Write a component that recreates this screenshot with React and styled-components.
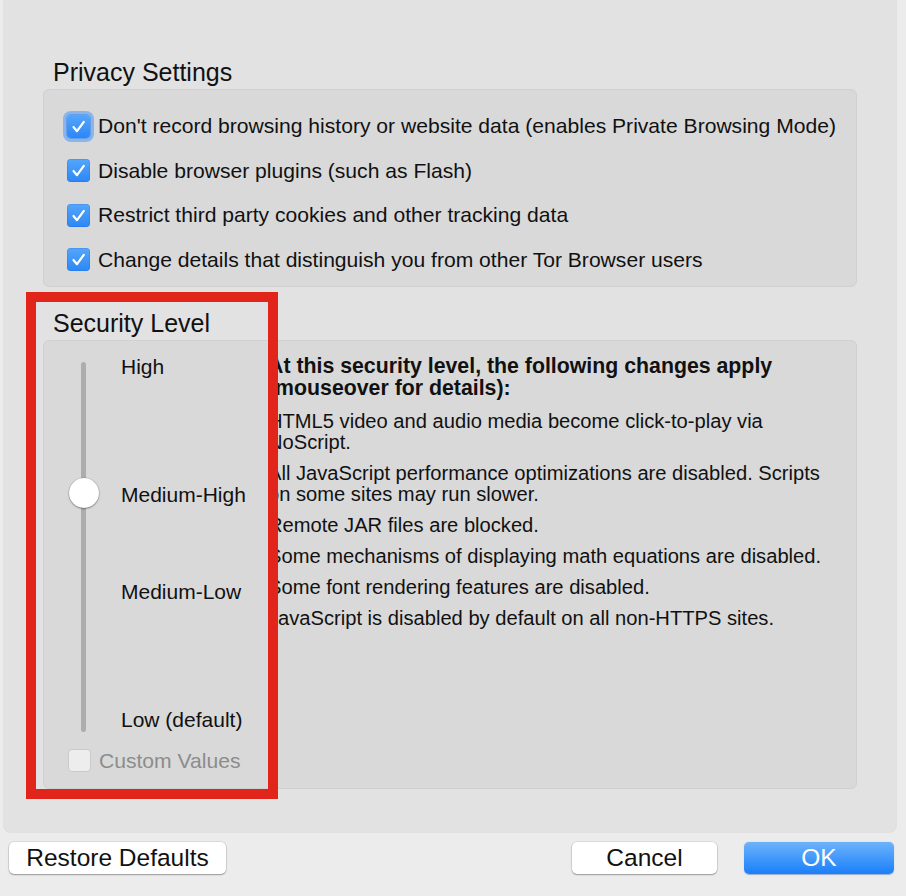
import React from "react";
import styled, { createGlobalStyle } from "styled-components";

const GlobalStyle = createGlobalStyle`
  html, body {
    margin: 0;
    padding: 0;
    background: #ececec;
  }
  body {
    font-family: "Liberation Sans", Arial, Helvetica, sans-serif;
    color: #111;
  }
  * {
    box-sizing: border-box;
  }
`;

const privacyOptions = [
  "Don't record browsing history or website data (enables Private Browsing Mode)",
  "Disable browser plugins (such as Flash)",
  "Restrict third party cookies and other tracking data",
  "Change details that distinguish you from other Tor Browser users",
];

// gap = space above each label, matches the uneven XUL spacing
const levels = [
  { label: "High", gap: 0 },
  { label: "Medium-High", gap: 103.5 },
  { label: "Medium-Low", gap: 72.7 },
  { label: "Low (default)", gap: 104.1 },
];

const changes = [
  "HTML5 video and audio media become click-to-play via NoScript.",
  "All JavaScript performance optimizations are disabled. Scripts on some sites may run slower.",
  "Remote JAR files are blocked.",
  "Some mechanisms of displaying math equations are disabled.",
  "Some font rendering features are disabled.",
  "JavaScript is disabled by default on all non-HTTPS sites.",
];

function CheckMark() {
  return (
    <svg width="23" height="23" viewBox="0 0 23 23">
      <polyline
        points="6.5,12 10,16.2 16.8,6.8"
        fill="none"
        stroke="#fff"
        strokeWidth="2.2"
        strokeLinecap="round"
        strokeLinejoin="round"
      />
    </svg>
  );
}

function App() {
  return (
    <>
      <GlobalStyle />
      <Page>
        <Panel>
          <SectionTitle $first>Privacy Settings</SectionTitle>
          <PrivacyBox>
            {privacyOptions.map((text, i) => (
              <CheckRow key={text}>
                <Checkbox $focused={i === 0}>
                  <CheckMark />
                </Checkbox>
                <span>{text}</span>
              </CheckRow>
            ))}
          </PrivacyBox>

          <SectionTitle>Security Level</SectionTitle>
          <SecurityBox>
            <LeftColumn>
              <LevelArea>
                <SliderColumn>
                  <Track />
                  <Thumb $top={122.5} />
                </SliderColumn>
                <Labels>
                  {levels.map((l) => (
                    <LevelLabel key={l.label} $gap={l.gap}>
                      {l.label}
                    </LevelLabel>
                  ))}
                </Labels>
              </LevelArea>
              <CustomRow>
                <DisabledBox />
                <span>Custom Values</span>
              </CustomRow>
            </LeftColumn>

            <Description>
              <DescTitle>
                At this security level, the following changes apply
                (mouseover for details):
              </DescTitle>
              {changes.map((c) => (
                <DescItem key={c}>{c}</DescItem>
              ))}
            </Description>
          </SecurityBox>
        </Panel>

        <Footer>
          <Button $width={217}>Restore Defaults</Button>
          <Spacer />
          <Button $width={145}>Cancel</Button>
          <Button $width={150} $primary>
            OK
          </Button>
        </Footer>

        <Annotation />
      </Page>
    </>
  );
}

export default App;

const Page = styled.div`
  position: relative;
  width: 906px;
  height: 896px;
  overflow: hidden;
  background: #ececec;
`;

const Panel = styled.div`
  margin-left: 4px;
  width: 892px;
  padding: 58px 39px 43px;
  background: #e2e2e2;
  border-radius: 0 0 6px 6px;
  box-shadow: 0 0 0 0.5px #d6d6d6;
`;

const SectionTitle = styled.div`
  font-size: 25px;
  line-height: 28px;
  padding-left: 10px;
  margin: ${(p) => (p.$first ? "0" : "22px")} 0 3px;
`;

const GroupBox = styled.div`
  background: #d9d9d9;
  border: 1px solid #d0d0d0;
  border-radius: 6px;
`;

const PrivacyBox = styled(GroupBox)`
  display: flex;
  flex-direction: column;
  gap: 20.67px;
  padding: 24px 20px 14px 23px;
`;

const CheckRow = styled.div`
  display: flex;
  align-items: center;
  gap: 8px;
  height: 24px;
  font-size: 21.1px;
  line-height: 24px;
  white-space: nowrap;
`;

const Checkbox = styled.div`
  flex: none;
  width: 23px;
  height: 23px;
  border-radius: 4px;
  background: linear-gradient(#55a6fb, #2c87f6);
  box-shadow: ${(p) =>
    p.$focused
      ? "0 0 0 1px rgba(40,110,220,0.35), 0 0 0 4px rgba(122,174,240,0.85)"
      : "inset 0 0 0 0.5px rgba(0,60,160,0.25)"};
  display: flex;
  align-items: center;
  justify-content: center;
`;

const SecurityBox = styled(GroupBox)`
  display: flex;
  height: 449px;
  padding: 14.5px 0 0 24px;
`;

const LeftColumn = styled.div`
  flex: none;
  width: 200px;
  display: flex;
  flex-direction: column;
`;

const LevelArea = styled.div`
  display: flex;
  gap: 22px;
`;

const SliderColumn = styled.div`
  position: relative;
  flex: none;
  width: 31px;
  display: flex;
  justify-content: center;
  padding: 7px 0 0;
`;

const Track = styled.div`
  width: 5px;
  height: 100%;
  border-radius: 3px;
  background: #adadad;
`;

const Thumb = styled.div`
  position: absolute;
  left: 0.5px;
  top: ${(p) => p.$top}px;
  width: 30px;
  height: 30px;
  border-radius: 50%;
  background: #fff;
  box-shadow: 0 1px 2px rgba(0, 0, 0, 0.3), 0 0 0 0.5px rgba(0, 0, 0, 0.18);
`;

const Labels = styled.div`
  display: flex;
  flex-direction: column;
`;

const LevelLabel = styled.div`
  margin-top: ${(p) => p.$gap}px;
  font-size: 21px;
  line-height: 24px;
  white-space: nowrap;
`;

const CustomRow = styled(CheckRow)`
  margin-top: 17px;
  color: #8c8c8c;
`;

const DisabledBox = styled.div`
  flex: none;
  width: 23px;
  height: 23px;
  border-radius: 4px;
  background: #ededed;
  border: 1px solid #cacaca;
`;

const Description = styled.div`
  width: 560px;
`;

const DescTitle = styled.div`
  font-weight: bold;
  font-size: 21.3px;
  line-height: 22px;
  margin-bottom: 11.4px;
`;

const DescItem = styled.div`
  font-size: 20.15px;
  line-height: 21px;
  margin-bottom: 10px;
`;

const Footer = styled.div`
  display: flex;
  align-items: center;
  gap: 27px;
  padding: 10px 12px 0 9px;
`;

const Spacer = styled.div`
  flex: 1;
`;

const Button = styled.div`
  width: ${(p) => p.$width}px;
  height: 32px;
  border-radius: 5px;
  display: flex;
  align-items: center;
  justify-content: center;
  font-size: 24.5px;
  color: ${(p) => (p.$primary ? "#fff" : "#111")};
  background: ${(p) =>
    p.$primary ? "linear-gradient(#6db3fa, #1a7ffa)" : "#fff"};
  box-shadow: ${(p) =>
    p.$primary
      ? "0 0.5px 1px rgba(0,60,160,0.35)"
      : "0 1px 1.5px rgba(0,0,0,0.3), 0 0 0 0.5px rgba(0,0,0,0.15)"};
`;

const Annotation = styled.div`
  position: absolute;
  left: 26px;
  top: 292px;
  width: 252px;
  height: 507px;
  border: 10px solid #e1251b;
  pointer-events: none;
`;
